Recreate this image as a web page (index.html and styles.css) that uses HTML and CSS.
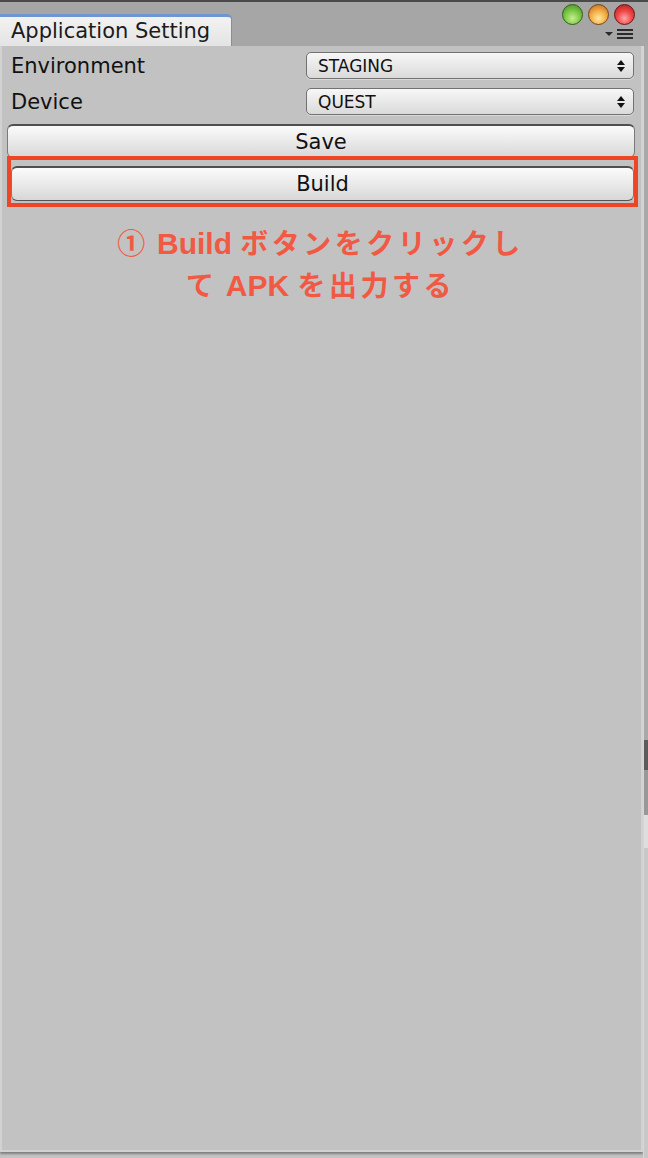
FILE: index.html
```html
<!DOCTYPE html>
<html lang="ja">
<head>
    <meta charset="UTF-8">
    <meta name="viewport" content="width=device-width, initial-scale=1.0">
    <title>Application Setting</title>
    <link rel="stylesheet" href="styles.css">
</head>
<body>
    <div class="window">
        <!-- Barra superior con la pestaña -->
        <div class="titlebar">
            <div class="tab">Application Setting</div>
            <div class="controls">
                <div class="lights">
                    <span class="light green"></span>
                    <span class="light orange"></span>
                    <span class="light red"></span>
                </div>
                <div class="menu">
                    <svg width="30" height="10" viewBox="0 0 30 10">
                        <polygon points="1,3 9,3 5,7" fill="#2b2b2b"/>
                        <rect x="13" y="0" width="16" height="2" fill="#2b2b2b"/>
                        <rect x="13" y="4" width="16" height="2" fill="#2b2b2b"/>
                        <rect x="13" y="8" width="16" height="2" fill="#2b2b2b"/>
                    </svg>
                </div>
            </div>
        </div>

        <div class="content">
            <div class="panel">
                <div class="field">
                    <span class="label">Environment</span>
                    <div class="popup">
                        <span>STAGING</span>
                        <svg class="arrows" width="8" height="12" viewBox="0 0 8 12">
                            <polygon points="4,0 8,5 0,5" fill="#111"/>
                            <polygon points="0,7 8,7 4,12" fill="#111"/>
                        </svg>
                    </div>
                </div>
                <div class="field">
                    <span class="label">Device</span>
                    <div class="popup">
                        <span>QUEST</span>
                        <svg class="arrows" width="8" height="12" viewBox="0 0 8 12">
                            <polygon points="4,0 8,5 0,5" fill="#111"/>
                            <polygon points="0,7 8,7 4,12" fill="#111"/>
                        </svg>
                    </div>
                </div>

                <button class="btn btn-save">Save</button>
                <button class="btn btn-build marked">Build</button>

                <p class="note"><span class="jp">①</span> Build <span class="jp">ボタンをクリックし</span><br><span class="jp">て</span> APK <span class="jp">を出力する</span></p>
            </div>

            <!-- Borde derecho de la ventana de atrás -->
            <div class="edge">
                <div class="seg seg-top"></div>
                <div class="seg seg-dark"></div>
                <div class="seg seg-mid"></div>
                <div class="seg seg-light"></div>
                <div class="seg seg-rest"></div>
            </div>
        </div>
    </div>
</body>
</html>
```

FILE: styles.css
```css
/* Estilo general */
body {
    margin: 0;
    padding: 0;
    width: 648px;
    height: 1158px;
    overflow: hidden;
    background: #c3c3c3;
    font-family: 'DejaVu Sans', 'Noto Sans CJK JP', sans-serif;
    color: #111;
}

.window {
    display: flex;
    flex-direction: column;
    height: 1158px;
}

/* Barra de título */
.titlebar {
    height: 46px;
    display: flex;
    justify-content: space-between;
    background: #a6a6a6;
    border-top: 2px solid #4a4a4a;
    box-sizing: border-box;
}

.tab {
    margin-top: 12px;
    width: 232px;
    height: 32px;
    box-sizing: border-box;
    padding-left: 11px;
    border-top: 3px solid #6f95d2;
    border-right: 1px solid #8d8d8d;
    border-top-right-radius: 5px;
    background: linear-gradient(#f2f2f2, #e4e4e4);
    font-size: 21px;
    line-height: 29px;
    color: #1b1b1b;
}

.controls {
    width: 90px;
    display: flex;
    flex-direction: column;
    align-items: flex-end;
    padding-right: 13px;
}

.lights {
    display: flex;
    gap: 5px;
    margin-top: 2px;
}

.light {
    width: 21px;
    height: 21px;
    border-radius: 50%;
    box-sizing: border-box;
}

.light.green {
    background: radial-gradient(circle at 50% 70%, #c6f08e 0%, #7fc94a 45%, #3f8a1d 100%);
    border: 1px solid #2f5f17;
}

.light.orange {
    background: radial-gradient(circle at 50% 70%, #ffe9a0 0%, #f4b048 45%, #b9621a 100%);
    border: 1px solid #7a4314;
}

.light.red {
    background: radial-gradient(circle at 50% 70%, #ffa7a7 0%, #f04848 45%, #a81818 100%);
    border: 1px solid #6e1212;
}

.menu {
    margin-top: 4px;
    margin-right: 1px;
    height: 10px;
}

.menu svg {
    display: block;
}

/* Contenido */
.content {
    flex: 1;
    display: flex;
}

.panel {
    width: 643px;
    height: 1106px;
    box-sizing: border-box;
    background: #c2c2c2;
    border: 2px solid #d2d2d2;
    border-top: none;
    box-shadow: 0 2px 2px rgba(0, 0, 0, 0.35);
    padding: 6px 7px 0 5px;
    display: flex;
    flex-direction: column;
}

.field {
    display: flex;
    align-items: center;
    justify-content: space-between;
    height: 27px;
    margin-bottom: 9px;
}

.label {
    padding-left: 4px;
    font-size: 21px;
}

.popup {
    width: 328px;
    height: 27px;
    box-sizing: border-box;
    display: flex;
    align-items: center;
    justify-content: space-between;
    padding: 0 8px 0 11px;
    border: 1px solid #727272;
    border-radius: 5px;
    background: linear-gradient(#f7f7f7, #dadada);
    box-shadow: 0 1px 0 rgba(255, 255, 255, 0.4);
    font-size: 17px;
}

.arrows {
    display: block;
}

/* Botones */
.btn {
    display: block;
    font-family: 'DejaVu Sans', sans-serif;
    font-size: 21px;
    color: #111;
    border: 1px solid #555;
    border-left-color: #7a7a7a;
    border-right-color: #7a7a7a;
    border-top: 2px solid #4f4f4f;
    border-radius: 6px;
    background: linear-gradient(#fbfbfb, #e6e6e6 60%, #d7d7d7);
    padding: 0;
}

.btn-save {
    height: 34px;
    width: 628px;
    margin-left: 0;
}

.btn-build {
    height: 35px;
    width: 623px;
    margin-left: 4px;
    margin-top: 8px;
}

/* Marco rojo de la anotación */
.marked {
    position: relative;
}

.marked::after {
    content: '';
    position: absolute;
    top: -12px;
    left: -5px;
    right: -5px;
    bottom: -7px;
    border: 4px solid #ee4527;
}

/* Texto de la anotación */
.note {
    margin: 21px 0 0;
    text-align: center;
    font-family: 'Liberation Sans', 'Noto Sans CJK JP', sans-serif;
    font-weight: bold;
    font-size: 30px;
    line-height: 40px;
    color: #f05a44;
}

.note .jp {
    font-family: 'Noto Sans CJK JP', sans-serif;
    font-size: 28px;
    letter-spacing: 3.5px;
}

/* Borde derecho */
.edge {
    width: 5px;
    display: flex;
    flex-direction: column;
    border-left: 1px solid #d6d6d6;
    box-sizing: border-box;
}

.seg-top {
    height: 694px;
    background: #a9a9a9;
}

.seg-dark {
    height: 30px;
    background: #5c5c5c;
}

.seg-mid {
    height: 45px;
    background: #989898;
}

.seg-light {
    height: 33px;
    background: #dedede;
}

.seg-rest {
    flex: 1;
    background: #c8c8c8;
}
```
